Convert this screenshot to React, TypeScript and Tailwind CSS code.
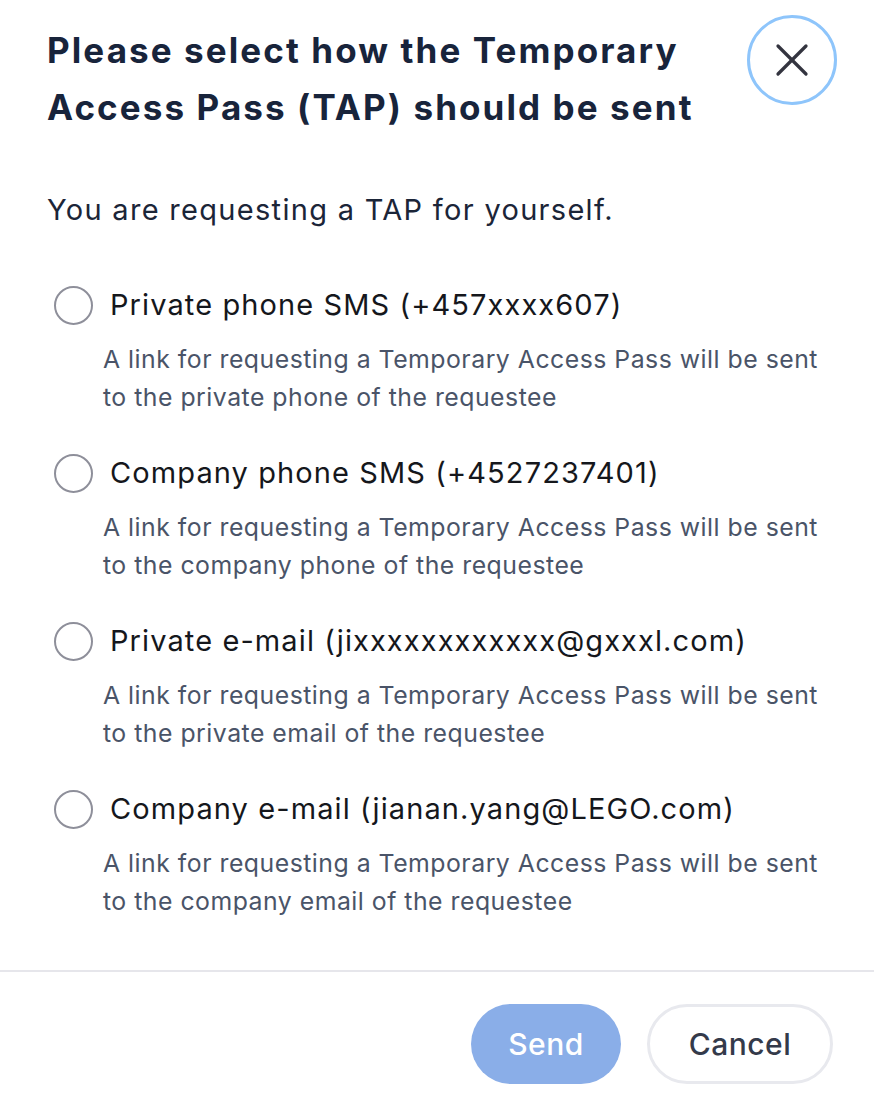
import { X } from "lucide-react"

const options = [
  {
    label: "Private phone SMS (+457xxxx607)",
    note: "A link for requesting a Temporary Access Pass will be sent to the private phone of the requestee",
  },
  {
    label: "Company phone SMS (+4527237401)",
    note: "A link for requesting a Temporary Access Pass will be sent to the company phone of the requestee",
  },
  {
    label: "Private e-mail (jixxxxxxxxxxxx@gxxxl.com)",
    note: "A link for requesting a Temporary Access Pass will be sent to the private email of the requestee",
  },
  {
    label: "Company e-mail (jianan.yang@LEGO.com)",
    note: "A link for requesting a Temporary Access Pass will be sent to the company email of the requestee",
  },
]

export default function App() {
  return (
    <div className="min-h-[1110px] w-[874px] bg-white font-['Inter',sans-serif] text-[#1b2538]">
      {/* Header */}
      <div className="flex items-start justify-between pl-[47px] pr-[37px] pt-[15px]">
        <h1 className="mt-[7px] w-[680px] text-[35px] font-bold leading-[57px] tracking-[2.1px] text-[#18243b]">
          Please select how the Temporary Access Pass (TAP) should be sent
        </h1>
        <button className="flex h-[90px] w-[90px] shrink-0 items-center justify-center rounded-full border-[3px] border-[#8ec5fb] text-[#33343f]">
          <X size={56} strokeWidth={1.4} />
        </button>
      </div>

      <p className="mt-[54px] pl-[47px] text-[29px] leading-[40px] tracking-[1.3px] text-[#1b2538]">
        You are requesting a TAP for yourself.
      </p>

      {/* Options */}
      <div className="mt-[55px] flex flex-col gap-[37px] pl-[54px] pr-[46px]">
        {options.map((o) => (
          <label key={o.label} className="flex flex-col">
            <div className="flex items-center gap-[17px]">
              <span className="h-[39px] w-[39px] shrink-0 rounded-full border-2 border-[#8e8f9a] bg-white" />
              <span className="text-[29px] leading-[40px] tracking-[1.1px] text-[#15171c]">{o.label}</span>
            </div>
            <p className="mt-[15px] pl-[49px] text-[24.8px] leading-[38px] tracking-[0.5px] text-[#4a5468]">
              {o.note}
            </p>
          </label>
        ))}
      </div>

      {/* Footer */}
      <div className="mt-[50px] border-t-2 border-[#e6e6eb]" />
      <div className="flex justify-end gap-[26px] pr-[41px] pt-[32px]">
        <button className="h-[80px] w-[150px] rounded-full bg-[#8aaee8] text-[30px] font-medium tracking-[0.5px] text-white">
          Send
        </button>
        <button className="h-[80px] w-[186px] rounded-full border-[3px] border-[#e8e9ee] bg-white text-[30px] font-medium tracking-[0.5px] text-[#343a4a]">
          Cancel
        </button>
      </div>
    </div>
  )
}
